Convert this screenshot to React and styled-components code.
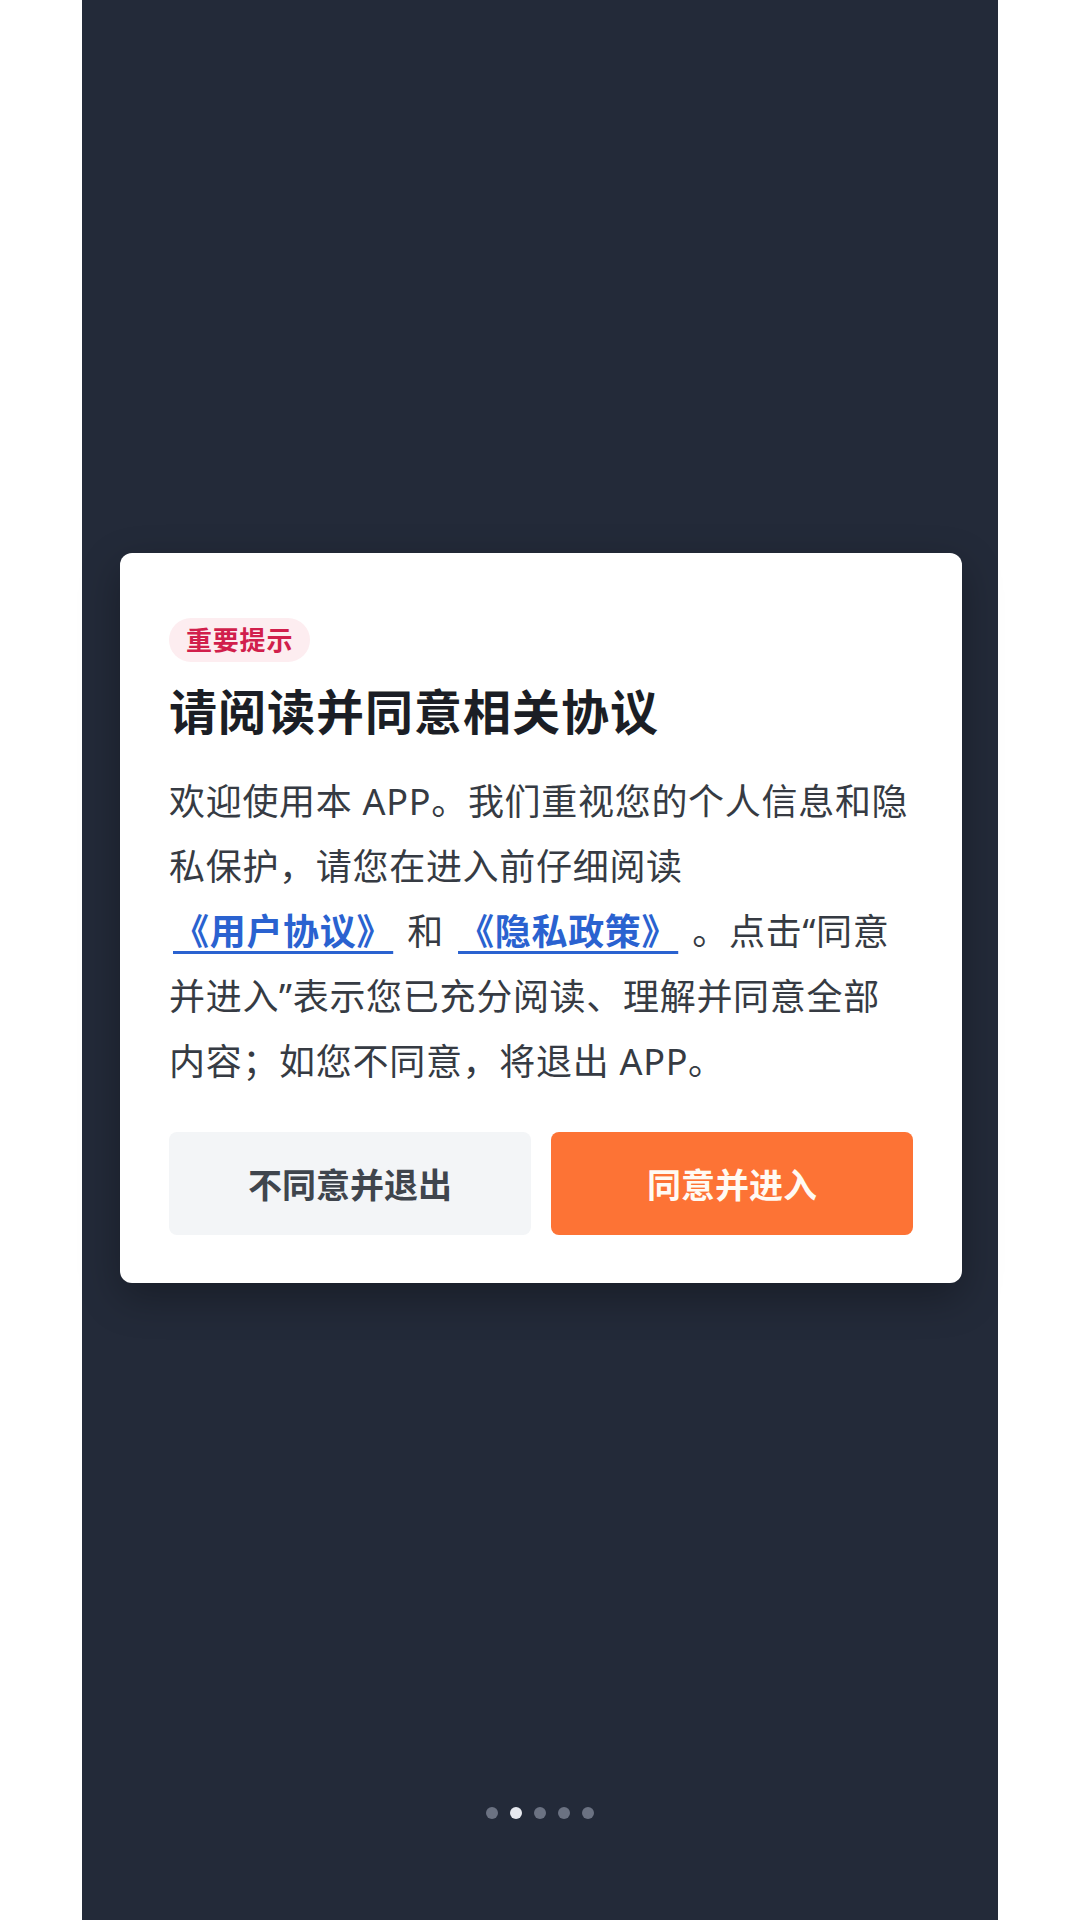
import styled, { createGlobalStyle } from "styled-components";

const GlobalStyle = createGlobalStyle`
  * { box-sizing: border-box; }
  body {
    margin: 0;
    background: #ffffff;
    font-family: "Noto Sans", "Noto Sans CJK SC", sans-serif;
  }
`;

const Screen = styled.div`
  position: relative;
  width: 916px;
  min-height: 1920px;
  margin: 0 auto;
  background: #232a39;
  display: flex;
  align-items: center;
  justify-content: center;
  padding-bottom: 85px;
`;

const Dialog = styled.div`
  width: 842px;
  margin-left: 2px;
  background: #ffffff;
  border-radius: 12px;
  padding: 65px 49px 48px;
  box-shadow: 0 14px 40px rgba(0, 0, 0, 0.3);
`;

const Badge = styled.span`
  display: inline-block;
  height: 44px;
  line-height: 44px;
  padding: 0 17px;
  border-radius: 22px;
  background: #fdedf0;
  color: #d11f4c;
  font-size: 26px;
  font-weight: 700;
  letter-spacing: 0.8px;
`;

const Title = styled.h1`
  margin: 19px 0 0;
  font-size: 48px;
  line-height: 62px;
  font-weight: 700;
  letter-spacing: 1px;
  color: #1b1e25;
`;

const Body = styled.p`
  margin: 26px 0 0;
  font-size: 36px;
  line-height: 65px;
  letter-spacing: 0.7px;
  color: #363b43;
`;

const Link = styled.a`
  margin: 0 4px;
  color: #2a62d0;
  font-weight: 700;
  text-decoration: underline;
  text-decoration-thickness: 3px;
  text-underline-offset: 6px;
  cursor: pointer;
`;

const Actions = styled.div`
  display: flex;
  gap: 20px;
  margin-top: 38px;
`;

const Button = styled.button`
  flex: 1;
  height: 103px;
  border: none;
  border-radius: 8px;
  font-family: inherit;
  font-size: 34px;
  font-weight: 700;
  background: ${(p) => (p.primary ? "#fd7335" : "#f3f5f7")};
  color: ${(p) => (p.primary ? "#fffaf3" : "#3f454d")};
  cursor: pointer;
`;

const Dots = styled.div`
  position: absolute;
  left: 0;
  right: 0;
  bottom: 101px;
  display: flex;
  justify-content: center;
  gap: 12px;
`;

const Dot = styled.span`
  width: 12px;
  height: 12px;
  border-radius: 50%;
  background: ${(p) => (p.active ? "#e6e8ef" : "#6b7282")};
`;

export default function App() {
  return (
    <>
      <GlobalStyle />
      <Screen>
        <Dialog>
          <Badge>重要提示</Badge>
          <Title>请阅读并同意相关协议</Title>
          <Body>
            欢迎使用本 APP。我们重视您的个人信息和隐私保护，请您在进入前仔细阅读
            <br />
            <Link>《用户协议》</Link> 和 <Link>《隐私政策》</Link> 。点击“同意并进入”表示您已充分阅读、理解并同意全部内容；如您不同意，将退出 APP。
          </Body>
          <Actions>
            <Button>不同意并退出</Button>
            <Button primary>同意并进入</Button>
          </Actions>
        </Dialog>
        <Dots>
          {[0, 1, 2, 3, 4].map((i) => (
            <Dot key={i} active={i === 1} />
          ))}
        </Dots>
      </Screen>
    </>
  );
}
